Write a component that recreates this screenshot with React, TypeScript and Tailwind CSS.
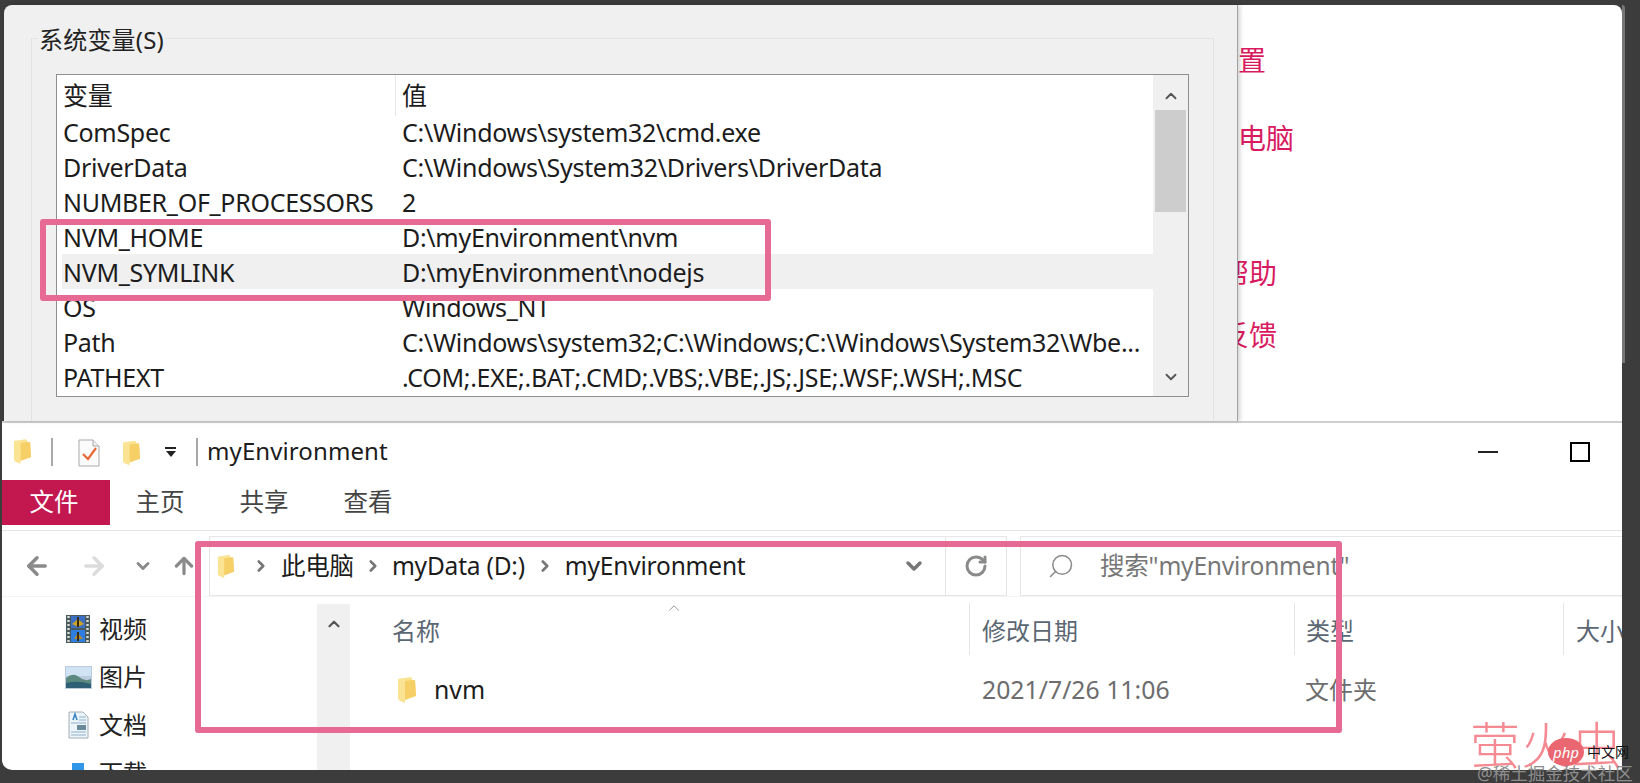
import { ArrowLeft, ArrowRight, ArrowUp, ChevronDown, ChevronRight, ChevronUp, RotateCw, Search } from 'lucide-react';

const variables = [
    ['ComSpec', 'C:\\Windows\\system32\\cmd.exe'],
    ['DriverData', 'C:\\Windows\\System32\\Drivers\\DriverData'],
    ['NUMBER_OF_PROCESSORS', '2'],
    ['NVM_HOME', 'D:\\myEnvironment\\nvm'],
    ['NVM_SYMLINK', 'D:\\myEnvironment\\nodejs'],
    ['OS', 'Windows_NT'],
    ['Path', 'C:\\Windows\\system32;C:\\Windows;C:\\Windows\\System32\\Wbe...'],
    ['PATHEXT', '.COM;.EXE;.BAT;.CMD;.VBS;.VBE;.JS;.JSE;.WSF;.WSH;.MSC'],
];

function FolderIcon({ className }: { className?: string }) {
    return (
        <svg className={className} viewBox="0 0 20 28">
            <path d="M1 3 L13 1 Q15 1 15 3 L15 4 L18 4 L19 20 L8 22 L8 27 L3 25 Q1 24 1 22 Z" fill="#fbe394" />
            <path d="M8 5 L15 4 L18 4 L19 20 L8 24 Z" fill="#f6cf66" />
        </svg>
    );
}

function CheckDocIcon() {
    return (
        <svg className="w-[22px] h-[28px]" viewBox="0 0 22 28">
            <path d="M1 1 H15 L21 7 V27 H1 Z" fill="#fbfbfb" stroke="#a9a9a9" />
            <path d="M15 1 V7 H21" fill="#eee" stroke="#a9a9a9" />
            <path d="M5 15 L10 20 L18 9" fill="none" stroke="#e8693a" strokeWidth="2.2" />
        </svg>
    );
}

function FilmIcon() {
    return (
        <svg className="w-[24px] h-[28px]" viewBox="0 0 24 28">
            <rect width="24" height="28" fill="#4a5a5a" />
            <rect x="5" y="1" width="14" height="12" fill="#3c6fc4" />
            <rect x="5" y="15" width="14" height="12" fill="#2e7de0" />
            <path d="M6 9 L12 4 L18 9 L12 12 Z" fill="#c9a228" />
            <path d="M8 24 L12 18 L17 24 Z" fill="#b8872a" />
            <path d="M12 2 V12 M12 17 V26" stroke="#3a2a10" strokeWidth="2" />
            <path d="M2.5 1 V27 M21.5 1 V27" stroke="#d7dedc" strokeWidth="2.4" strokeDasharray="2 2" />
        </svg>
    );
}

function PhotoIcon() {
    return (
        <svg className="w-[27px] h-[23px]" viewBox="0 0 27 23">
            <rect width="27" height="23" fill="#b9cbdd" />
            <rect x="1" y="1" width="25" height="9" fill="#cfe3f4" />
            <path d="M1 12 Q8 6 14 11 T26 13 V22 H1 Z" fill="#5c8a80" />
            <path d="M1 17 Q12 14 26 18 V22 H1 Z" fill="#2f5f74" />
        </svg>
    );
}

function TextDocIcon() {
    return (
        <svg className="w-[21px] h-[28px]" viewBox="0 0 21 28">
            <path d="M1 1 H15 L20 6 V27 H1 Z" fill="#eef5fa" stroke="#a4aeb5" />
            <path d="M5 9 L7 3 L9 9" fill="none" stroke="#3d86c6" strokeWidth="1.6" />
            <path d="M11 6 H18 M11 9 H18 M3 12 H18 M3 21 H18 M3 24 H18" stroke="#8fb0c8" />
            <path d="M9 14 H18 V19 H9 Z" fill="#6b8a99" />
        </svg>
    );
}

const navItems = [
    { label: '视频', icon: <FilmIcon /> },
    { label: '图片', icon: <PhotoIcon /> },
    { label: '文档', icon: <TextDocIcon /> },
    { label: '下载', icon: <div className="h-[20px] w-[12px] bg-[#2f96e8]" /> },
];

export default function App() {
    return (
        <div
            className="relative w-[1640px] h-[783px] overflow-hidden bg-[#3c3c3c] pt-[5px] text-black"
            style={{ fontFamily: '"Noto Sans", "Noto Sans CJK SC", sans-serif' }}
        >
            {/* Top: environment variables dialog over the settings pane */}
            <div className="flex h-[416px] pl-[4px] pr-[15px]">
                <div className="relative z-10 w-[1234px] shrink-0 rounded-tl-[8px] bg-[#f0f0f0] pt-[33px] pl-[27px] pr-[23px] border-r border-[#a0a0a0] shadow-[2px_0_4px_rgba(0,0,0,0.18)]">
                    <div className="relative h-full border border-b-0 border-[#e3e3e3] pt-[35px] pl-[24px] pr-[24px]">
                        <span className="absolute left-[6px] top-[-15px] bg-[#f0f0f0] px-[1px] text-[24px] leading-[32px] tracking-[0.2px] text-[#222]">
                            系统变量(S)
                        </span>
                        <div className="flex h-[323px] overflow-hidden border border-[#8f8f8f] bg-white text-[25px] tracking-[-0.3px] text-[#1c1c1c]">
                            <div className="min-w-0 flex-1 pl-[5px]">
                                <div className="grid h-[39px] grid-cols-[333px_1fr] items-start">
                                    <span className="pl-[1px] leading-[41px]">变量</span>
                                    <span className="border-l border-[#e8e8e8] pl-[6px] leading-[41px]">值</span>
                                </div>
                                {variables.map(([name, value]) => (
                                    <div
                                        key={name}
                                        className={`grid h-[35px] grid-cols-[333px_1fr] items-center whitespace-nowrap ${
                                            name === 'NVM_SYMLINK' ? 'bg-[#f0f0f0]' : ''
                                        }`}
                                    >
                                        <span className="pl-[1px]">{name}</span>
                                        <span className="pl-[7px]">{value}</span>
                                    </div>
                                ))}
                            </div>
                            <div className="flex w-[35px] shrink-0 flex-col items-center bg-[#f0f0f0]">
                                <div className="flex h-[35px] items-center justify-center pt-[6px]">
                                    <ChevronUp className="h-[18px] w-[18px] text-[#555]" strokeWidth={2.5} />
                                </div>
                                <div className="h-[102px] w-[31px] bg-[#cdcdcd]" />
                                <div className="mt-auto flex h-[36px] items-center justify-center pb-[2px]">
                                    <ChevronDown className="h-[18px] w-[18px] text-[#555]" strokeWidth={2.5} />
                                </div>
                            </div>
                        </div>
                    </div>
                </div>

                <div className="min-w-0 flex-1 overflow-hidden rounded-tr-[8px] bg-white text-[28px] leading-[40px] text-[#d81b60]">
                    <div className="-ml-[28px] mt-[35px] whitespace-nowrap">设置</div>
                    <div className="-ml-[28px] mt-[38px] whitespace-nowrap">此电脑</div>
                    <div className="-ml-[17px] mt-[95px] whitespace-nowrap">帮助</div>
                    <div className="-ml-[17px] mt-[22px] whitespace-nowrap">反馈</div>
                </div>
                <div className="h-[358px] w-[3px] shrink-0 rounded-tr-[4px] bg-[#767676]" />
            </div>

            {/* Bottom: explorer window */}
            <div className="relative ml-[2px] mr-[18px] h-[349px] overflow-hidden rounded-bl-[10px] border-t-2 border-[#cfcfcf] bg-white">
                {/* Title bar */}
                <div className="flex h-[57px] items-center">
                    <FolderIcon className="ml-[11px] h-[27px] w-[19px] blur-[0.6px]" />
                    <div className="ml-[19px] h-[28px] w-[2px] bg-[#a8a8a8]" />
                    <div className="ml-[25px] mt-[3px]">
                        <CheckDocIcon />
                    </div>
                    <FolderIcon className="ml-[22px] mt-[3px] h-[28px] w-[19px] blur-[0.6px]" />
                    <div className="ml-[24px] flex flex-col items-center gap-[2px]">
                        <div className="h-[2px] w-[11px] bg-[#222]" />
                        <div className="h-0 w-0 border-x-[5px] border-t-[6px] border-x-transparent border-t-[#222]" />
                    </div>
                    <div className="ml-[20px] h-[28px] w-[2px] bg-[#a8a8a8]" />
                    <span className="ml-[9px] pb-[2px] text-[24px] tracking-[0.1px] text-[#1c1c1c]">myEnvironment</span>
                    <div className="ml-auto flex items-center">
                        <div className="h-[2px] w-[20px] bg-[#222]" />
                        <div className="ml-[72px] mr-[32px] h-[20px] w-[20px] border-2 border-black" />
                    </div>
                </div>

                {/* Ribbon tabs */}
                <div className="h-[51px] border-b border-[#e3e3e3]">
                    <div className="flex h-[45px] items-center text-[24.5px] text-[#444]">
                        <div className="flex h-full w-[108px] items-center justify-center bg-[#c2184f] pr-[4px] text-white">文件</div>
                        <span className="w-[100px] text-center">主页</span>
                        <span className="w-[108px] text-center">共享</span>
                        <span className="w-[100px] text-center">查看</span>
                    </div>
                </div>

                {/* Navigation bar */}
                <div className="flex h-[66px] items-center pt-[5px] border-b border-[#f4f4f4]">
                    <ArrowLeft className="ml-[21px] h-[28px] w-[28px] text-[#8a8a8a]" strokeWidth={3} />
                    <ArrowRight className="ml-[29px] h-[28px] w-[28px] text-[#dcdcdc]" strokeWidth={3} />
                    <ChevronDown className="ml-[25px] h-[20px] w-[20px] text-[#8a8a8a]" strokeWidth={3.5} />
                    <ArrowUp className="ml-[18px] h-[26px] w-[26px] text-[#8a8a8a]" strokeWidth={3} />
                    <div className="ml-[12px] flex h-[60px] w-[737px] items-center border border-[#e6e6e6] text-[24.5px] tracking-[-0.2px] text-[#1c1c1c]">
                        <FolderIcon className="ml-[7px] h-[25px] w-[18px] blur-[0.6px]" />
                        <ChevronRight className="ml-[17px] h-[18px] w-[18px] text-[#777]" strokeWidth={3.5} />
                        <span className="ml-[11px]">此电脑</span>
                        <ChevronRight className="ml-[10px] h-[18px] w-[18px] text-[#777]" strokeWidth={3.5} />
                        <span className="ml-[10px]">myData (D:)</span>
                        <ChevronRight className="ml-[11px] h-[18px] w-[18px] text-[#777]" strokeWidth={3.5} />
                        <span className="ml-[11px]">myEnvironment</span>
                        <ChevronDown className="ml-auto mr-[19px] h-[24px] w-[24px] text-[#777]" strokeWidth={3.5} />
                    </div>
                    <div className="flex h-[60px] w-[61px] items-center justify-center border border-l-0 border-[#e6e6e6]">
                        <RotateCw className="h-[24px] w-[24px] text-[#8a8a8a]" strokeWidth={3} />
                    </div>
                    <div className="ml-[13px] flex h-[60px] min-w-0 flex-1 items-center border-y border-l border-[#e6e6e6] text-[24.5px] tracking-[-0.2px] text-[#777]">
                        <Search className="ml-[26px] h-[28px] w-[28px] -scale-x-100 text-[#8a8a8a]" strokeWidth={1.3} />
                        <span className="ml-[25px]">搜索"myEnvironment"</span>
                    </div>
                </div>

                {/* Body */}
                <div className="flex h-[173px]">
                    <div className="w-[315px] shrink-0 pt-[8px] pl-[60px] text-[24px] text-[#222]">
                        {navItems.map((item) => (
                            <div key={item.label} className="flex h-[48px] items-center">
                                <div className="flex w-[32px] justify-center">{item.icon}</div>
                                <span className="ml-[5px]">{item.label}</span>
                            </div>
                        ))}
                    </div>
                    <div className="mt-[7px] flex w-[33px] shrink-0 justify-center bg-[#f0f0f0] pt-[11px]">
                        <ChevronUp className="h-[18px] w-[18px] text-[#555]" strokeWidth={3} />
                    </div>
                    <div className="relative min-w-0 flex-1">
                        <ChevronUp className="absolute left-[315px] top-[2px] h-[18px] w-[18px] text-[#888]" strokeWidth={1.2} />
                        <div className="grid h-[58px] grid-cols-[619px_325px_269px_1fr] items-end whitespace-nowrap text-[24px] text-[#5b6773]">
                            <div className="flex h-[52px] items-center pl-[42px] pt-[4px]">名称</div>
                            <div className="flex h-[52px] items-center border-l border-[#e6e6e6] pl-[12px] pt-[4px]">修改日期</div>
                            <div className="flex h-[52px] items-center border-l border-[#e6e6e6] pl-[11px] pt-[4px]">类型</div>
                            <div className="flex h-[52px] items-center border-l border-[#e6e6e6] pl-[12px] pt-[4px]">大小</div>
                        </div>
                        <div className="grid h-[70px] grid-cols-[619px_325px_269px_1fr] items-center whitespace-nowrap text-[24.8px] text-[#6d6d6d]">
                            <div className="flex items-center pl-[47px] text-[#1c1c1c]">
                                <FolderIcon className="h-[28px] w-[20px] blur-[0.6px]" />
                                <span className="ml-[17px]">nvm</span>
                            </div>
                            <div className="pl-[13px]">2021/7/26 11:06</div>
                            <div className="pl-[11px] text-[24px]">文件夹</div>
                            <div />
                        </div>
                    </div>
                </div>
            </div>

            {/* Red annotation boxes */}
            <div className="absolute left-[40px] top-[219px] z-20 h-[82px] w-[731px] rounded-[3px] border-[6px] border-[#e66a94]" />
            <div className="absolute left-[195px] top-[541px] h-[192px] w-[1147px] rounded-[3px] border-[6px] border-[#e66a94]" />

            {/* Watermarks */}
            <div className="absolute left-[1470px] top-[715px] text-[50px] leading-[60px] font-light tracking-[1px] text-[#f58a93] whitespace-nowrap">
                萤火虫
            </div>
            <div className="absolute left-[1548px] top-[738px] flex h-[28px] w-[36px] items-center justify-center rounded-[50%] bg-[#ea6670] text-[15px] italic leading-none text-white">
                php
            </div>
            <div className="absolute left-[1587px] top-[742px] text-[14px] leading-[20px] text-[#111] whitespace-nowrap">中文网</div>
            <div className="absolute left-[1477px] top-[763px] text-[17.5px] leading-[20px] text-[#8d8d8d] whitespace-nowrap">@稀土掘金技术社区</div>
        </div>
    );
}
